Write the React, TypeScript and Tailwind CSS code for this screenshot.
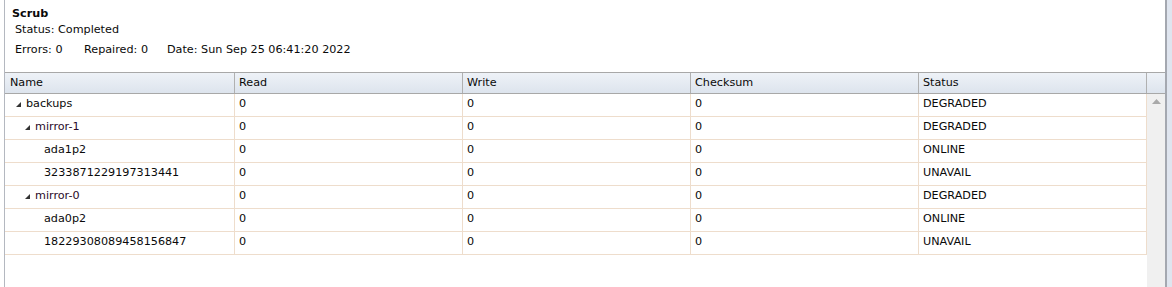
import React from "react";

type Row = { name: string; level: number; expandable: boolean; status: string };

const rows: Row[] = [
  { name: "backups", level: 0, expandable: true, status: "DEGRADED" },
  { name: "mirror-1", level: 1, expandable: true, status: "DEGRADED" },
  { name: "ada1p2", level: 2, expandable: false, status: "ONLINE" },
  { name: "3233871229197313441", level: 2, expandable: false, status: "UNAVAIL" },
  { name: "mirror-0", level: 1, expandable: true, status: "DEGRADED" },
  { name: "ada0p2", level: 2, expandable: false, status: "ONLINE" },
  { name: "18229308089458156847", level: 2, expandable: false, status: "UNAVAIL" },
];

function Tri() {
  return (
    <svg width="7" height="7" viewBox="0 0 7 7" className="shrink-0">
      <polygon points="6,1 6,6 1,6" fill="#333" />
    </svg>
  );
}

const cols = "grid grid-cols-[230px_228px_228px_228px_228px]";

export default function App() {
  return (
    <div className="w-[1172px] h-[287px] bg-white flex overflow-hidden font-['DejaVu_Sans',sans-serif] text-[11.2px] text-[#0a0a0a]">
      <div className="w-[4px]" />
      <div className="w-[1px] bg-[#b4b8c0]" />
      <div className="w-[1160px] flex flex-col">
        <div className="h-[72px] pl-[7px] pt-[6px]">
          <div className="font-bold leading-[16px]">Scrub</div>
          <div className="pl-[3px] leading-[16px] mt-[0px]">Status: Completed</div>
          <div className="pl-[3px] leading-[16px] mt-[4px] flex">
            <span className="w-[69px]">Errors: 0</span>
            <span className="w-[83px]">Repaired: 0</span>
            <span>Date: Sun Sep 25 06:41:20 2022</span>
          </div>
        </div>
        <div className="flex border-t border-b border-[#a8a8a8] h-[22px] bg-gradient-to-b from-[#eef2f7] to-[#dde4ed]">
          <div className={cols}>
            {["Name", "Read", "Write", "Checksum", "Status"].map((h, i) => (
              <div
                key={h}
                className={`h-[20px] border-r border-[#b0b0b0] flex items-center ${i === 0 ? "pl-[5px]" : "pl-[4px]"}`}
              >
                {h}
              </div>
            ))}
          </div>
          <div className="w-[18px]" />
        </div>
        <div className="flex flex-1">
          <div className="flex flex-col">
            {rows.map((r) => (
              <div key={r.name} className={cols}>
                <div
                  className="h-[23px] border-r border-b border-[#eeddcc] flex items-center pb-[1px]"
                  style={{ paddingLeft: 10 + r.level * 9 }}
                >
                  <span className="w-[11px] flex items-center">{r.expandable ? <Tri /> : null}</span>
                  <span className={r.level === 1 ? "text-[#2a0a28]" : ""}>{r.name}</span>
                </div>
                {["0", "0", "0", r.status].map((v, i) => (
                  <div
                    key={i}
                    className="h-[23px] border-r border-b border-[#eeddcc] flex items-center pl-[4px] pb-[1px]"
                  >
                    {v}
                  </div>
                ))}
              </div>
            ))}
          </div>
          <div className="w-[18px] bg-[#f0f0f0] flex justify-center pt-[5px]">
            <svg width="9" height="5" viewBox="0 0 9 5">
              <polygon points="4.5,0 9,5 0,5" fill="#a9a9a9" />
            </svg>
          </div>
        </div>
      </div>
      <div className="w-[2px] bg-[#a4a8b0]" />
      <div className="flex-1 bg-[#dfe5ef]" />
    </div>
  );
}
